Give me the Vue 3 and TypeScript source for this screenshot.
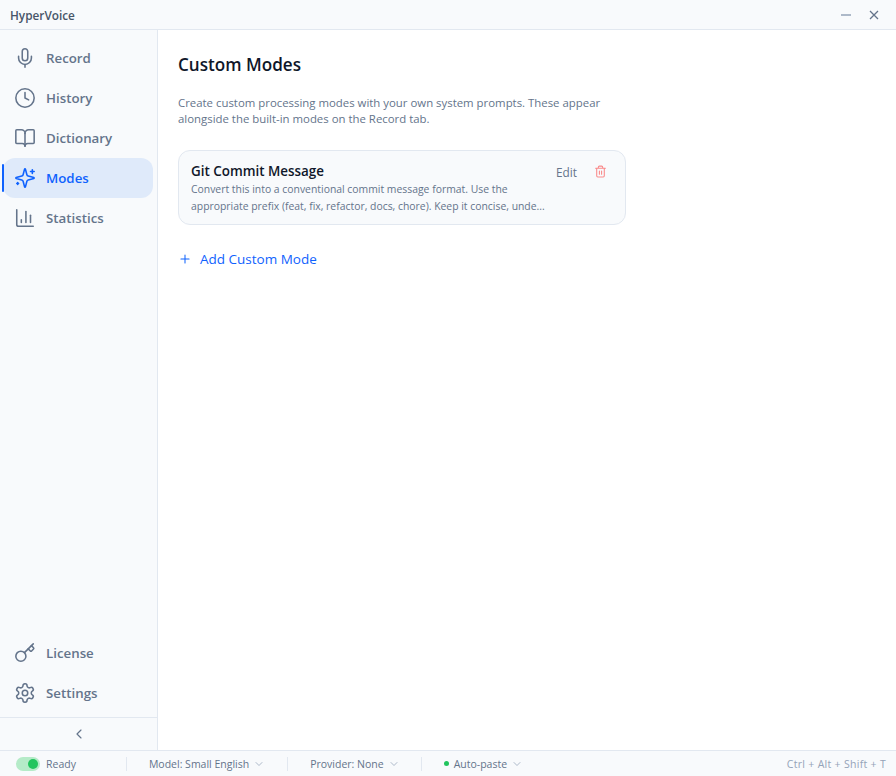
<script setup lang="ts">
interface NavItem { label: string; paths: string[]; active?: boolean }
const topNav: NavItem[] = [
  { label: 'Record', paths: ['M12 2a3 3 0 0 0-3 3v7a3 3 0 0 0 6 0V5a3 3 0 0 0-3-3Z', 'M19 10v2a7 7 0 0 1-14 0v-2', 'M12 19v3'] },
  { label: 'History', paths: ['M22 12a10 10 0 1 1-20 0 10 10 0 0 1 20 0Z', 'M12 6v6l4 2'] },
  { label: 'Dictionary', paths: ['M12 7v14', 'M3 18a1 1 0 0 1-1-1V4a1 1 0 0 1 1-1h5a4 4 0 0 1 4 4 4 4 0 0 1 4-4h5a1 1 0 0 1 1 1v13a1 1 0 0 1-1 1h-6a3 3 0 0 0-3 3 3 3 0 0 0-3-3Z'] },
  { label: 'Modes', active: true, paths: ['M9.937 15.5A2 2 0 0 0 8.5 14.063l-6.135-1.582a.5.5 0 0 1 0-.962L8.5 9.936A2 2 0 0 0 9.937 8.5l1.582-6.135a.5.5 0 0 1 .963 0L14.063 8.5A2 2 0 0 0 15.5 9.937l6.135 1.581a.5.5 0 0 1 0 .964L15.5 14.063a2 2 0 0 0-1.437 1.437l-1.582 6.135a.5.5 0 0 1-.963 0z', 'M20 3v4', 'M22 5h-4', 'M4 17v2', 'M5 18H3'] },
  { label: 'Statistics', paths: ['M3 3v16a2 2 0 0 0 2 2h16', 'M8 17v-3', 'M13 17V5', 'M18 17V9'] },
]
const bottomNav: NavItem[] = [
  { label: 'License', paths: ['M15.5 7.5l2.3 2.3a1 1 0 0 0 1.4 0l2.1-2.1a1 1 0 0 0 0-1.4L19 4', 'M21 2l-9.6 9.6', 'M13 15.5a5.5 5.5 0 1 1-11 0 5.5 5.5 0 0 1 11 0Z'] },
  { label: 'Settings', paths: ['M12.22 2h-.44a2 2 0 0 0-2 2v.18a2 2 0 0 1-1 1.73l-.43.25a2 2 0 0 1-2 0l-.15-.08a2 2 0 0 0-2.73.73l-.22.38a2 2 0 0 0 .73 2.73l.15.1a2 2 0 0 1 1 1.72v.51a2 2 0 0 1-1 1.74l-.15.09a2 2 0 0 0-.73 2.73l.22.38a2 2 0 0 0 2.73.73l.15-.08a2 2 0 0 1 2 0l.43.25a2 2 0 0 1 1 1.73V20a2 2 0 0 0 2 2h.44a2 2 0 0 0 2-2v-.18a2 2 0 0 1 1-1.73l.43-.25a2 2 0 0 1 2 0l.15.08a2 2 0 0 0 2.73-.73l.22-.39a2 2 0 0 0-.73-2.73l-.15-.08a2 2 0 0 1-1-1.74v-.5a2 2 0 0 1 1-1.74l.15-.09a2 2 0 0 0 .73-2.73l-.22-.38a2 2 0 0 0-2.73-.73l-.15.08a2 2 0 0 1-2 0l-.43-.25a2 2 0 0 1-1-1.73V4a2 2 0 0 0-2-2Z', 'M15 12a3 3 0 1 1-6 0 3 3 0 0 1 6 0Z'] },
]
</script>

<template>
  <div class="app">
    <header class="titlebar">
      <span class="app-name">HyperVoice</span>
      <div class="win-controls">
        <svg class="win-icon min" viewBox="0 0 12 12"><path d="M1 6h10" /></svg>
        <svg class="win-icon close" viewBox="0 0 12 12"><path d="M2 2l8 8M10 2l-8 8" /></svg>
      </div>
    </header>

    <div class="body">
      <aside class="sidebar">
        <nav class="nav">
          <a v-for="item in topNav" :key="item.label" class="nav-item" :class="{ active: item.active }">
            <svg class="nav-icon" viewBox="0 0 24 24"><path v-for="d in item.paths" :key="d" :d="d" /></svg>
            <span>{{ item.label }}</span>
          </a>
        </nav>
        <nav class="nav bottom">
          <a v-for="item in bottomNav" :key="item.label" class="nav-item">
            <svg class="nav-icon" viewBox="0 0 24 24"><path v-for="d in item.paths" :key="d" :d="d" /></svg>
            <span>{{ item.label }}</span>
          </a>
        </nav>
        <div class="collapse">
          <svg viewBox="0 0 24 24"><path d="M15 18l-6-6 6-6" /></svg>
        </div>
      </aside>

      <main class="main">
        <h1>Custom Modes</h1>
        <p class="intro">Create custom processing modes with your own system prompts. These appear alongside the built-in modes on the Record tab.</p>
        <section class="card">
          <div class="card-text">
            <h2>Git Commit Message</h2>
            <p>Convert this into a conventional commit message format. Use the appropriate prefix (feat, fix, refactor, docs, chore). Keep it concise, unde...</p>
          </div>
          <div class="card-actions">
            <span class="edit">Edit</span>
            <svg class="trash" viewBox="0 0 24 24">
              <path d="M3 6h18M19 6v14a2 2 0 0 1-2 2H7a2 2 0 0 1-2-2V6M8 6V4a2 2 0 0 1 2-2h4a2 2 0 0 1 2 2v2M10 11v6M14 11v6" />
            </svg>
          </div>
        </section>
        <div class="add">
          <svg viewBox="0 0 24 24"><path d="M5 12h14M12 5v14" /></svg>
          <span>Add Custom Mode</span>
        </div>
      </main>
    </div>

    <footer class="status">
      <div class="toggle"><i></i></div>
      <span class="ready">Ready</span>
      <span class="sep sep1"></span>
      <span class="st-item">Model: Small English<svg viewBox="0 0 24 24"><path d="M6 9l6 6 6-6" /></svg></span>
      <span class="sep sep2"></span>
      <span class="st-item">Provider: None<svg viewBox="0 0 24 24"><path d="M6 9l6 6 6-6" /></svg></span>
      <span class="sep sep3"></span>
      <span class="st-item"><i class="dot"></i>Auto-paste<svg viewBox="0 0 24 24"><path d="M6 9l6 6 6-6" /></svg></span>
      <span class="hotkey">Ctrl + Alt + Shift + T</span>
    </footer>
  </div>
</template>

<style>
html, body { margin: 0; background: #fff; }
</style>

<style scoped>
.app {
  width: 896px; height: 776px; display: flex; flex-direction: column; overflow: hidden;
  font-family: "Open Sans", "Noto Sans", sans-serif; color: #0f172a; background: #fff;
}
svg { fill: none; stroke: currentColor; stroke-linecap: round; stroke-linejoin: round; flex: none; display: block; }
.titlebar {
  height: 29px; flex: none; display: flex; align-items: center; justify-content: space-between;
  padding: 0 16px 0 10px; background: #f8fafc; border-bottom: 1px solid #e2e8f0;
}
.app-name { font-size: 11.8px; font-weight: 600; color: #475569; }
.win-controls { display: flex; align-items: center; gap: 16px; }
.win-icon { width: 12px; height: 12px; stroke-width: 1.3; stroke-linecap: butt; }
.min { color: #94a3b8; stroke-width: 1.5; }
.close { color: #64748b; }
.body { flex: 1; min-height: 0; display: flex; }
.sidebar {
  width: 157px; flex: none; display: flex; flex-direction: column; background: #f8fafc; border-right: 1px solid #e2e8f0;
}
.nav { display: flex; flex-direction: column; padding: 8px 4px 0 3px; }
.nav.bottom { margin-top: auto; padding-top: 0; padding-bottom: 4px; }
.nav-item {
  position: relative; height: 40px; display: flex; align-items: center; gap: 10px; padding-left: 11px;
  border-radius: 12px; font-size: 13.3px; font-weight: 600; color: #64748b;
}
.nav-icon { width: 22px; height: 22px; stroke-width: 1.7; }
.nav-item.active { background: #dfeafa; color: #0f62fe; }
.nav-item.active::before {
  content: ""; position: absolute; left: -1px; top: 6px; bottom: 6px; width: 2px; border-radius: 1px; background: #0f62fe;
}
.collapse {
  height: 32px; flex: none; border-top: 1px solid #e2e8f0; display: flex; align-items: center; justify-content: center; color: #64748b;
}
.collapse svg { width: 16px; height: 16px; stroke-width: 1.75; }
.main { flex: 1; min-width: 0; padding: 24px 20px; background: #fff; }
h1 { margin: 0; font-size: 17.1px; line-height: 22px; font-weight: 600; color: #0f172a; }
.intro { margin: 19px 0 0; width: 448px; font-size: 11.4px; line-height: 16px; color: #64748b; }
.card {
  box-sizing: border-box; width: 448px; height: 75px; margin-top: 23px; padding: 12px; display: flex; justify-content: space-between;
  border: 1px solid #e2e8f0; border-radius: 12px; background: #f8fafc;
}
.card-text { width: 360px; }
h2 { margin: 0; font-size: 13.4px; line-height: 17px; font-weight: 600; color: #0f172a; }
.card-text p {
  margin: 1px 0 0; font-size: 10.4px; line-height: 17px; color: #64748b;
  display: -webkit-box; -webkit-box-orient: vertical; -webkit-line-clamp: 2; overflow: hidden;
}
.card-actions { display: flex; align-items: flex-start; gap: 17px; padding: 1px 6px 0 0; }
.edit { font-size: 11.8px; line-height: 17px; color: #64748b; }
.trash { width: 13px; height: 13px; margin-top: 1px; stroke-width: 2; color: #f98b8b; }
.add { display: flex; align-items: center; gap: 8px; margin-top: 24px; font-size: 13.5px; line-height: 20px; color: #0f62fe; }
.add svg { width: 14px; height: 14px; stroke-width: 1.75; }
.status {
  height: 25px; flex: none; display: flex; align-items: center; padding: 0 10px 0 16px; background: #f8fafc;
  border-top: 1px solid #e2e8f0; font-size: 10.5px; color: #64748b;
}
.toggle { width: 24px; height: 14px; border-radius: 7px; background: #b5ebc8; display: flex; align-items: center; justify-content: flex-end; padding-right: 2px; box-sizing: border-box; }
.toggle i { width: 10px; height: 10px; border-radius: 50%; background: #22c55e; }
.ready { margin-left: 6px; }
.sep { width: 1px; height: 14px; background: #e2e8f0; }
.sep1 { margin: 0 22px 0 50px; }
.sep2 { margin: 0 22px; }
.sep3 { margin: 0 22px 0 21px; }
.st-item { display: flex; align-items: center; }
.st-item svg { width: 12px; height: 12px; margin-left: 4px; color: #94a3b8; stroke-width: 1.5; }
.dot { width: 5px; height: 5px; border-radius: 50%; background: #22c55e; margin-right: 5px; }
.hotkey { margin-left: auto; color: #94a3b8; letter-spacing: .3px; }
</style>
